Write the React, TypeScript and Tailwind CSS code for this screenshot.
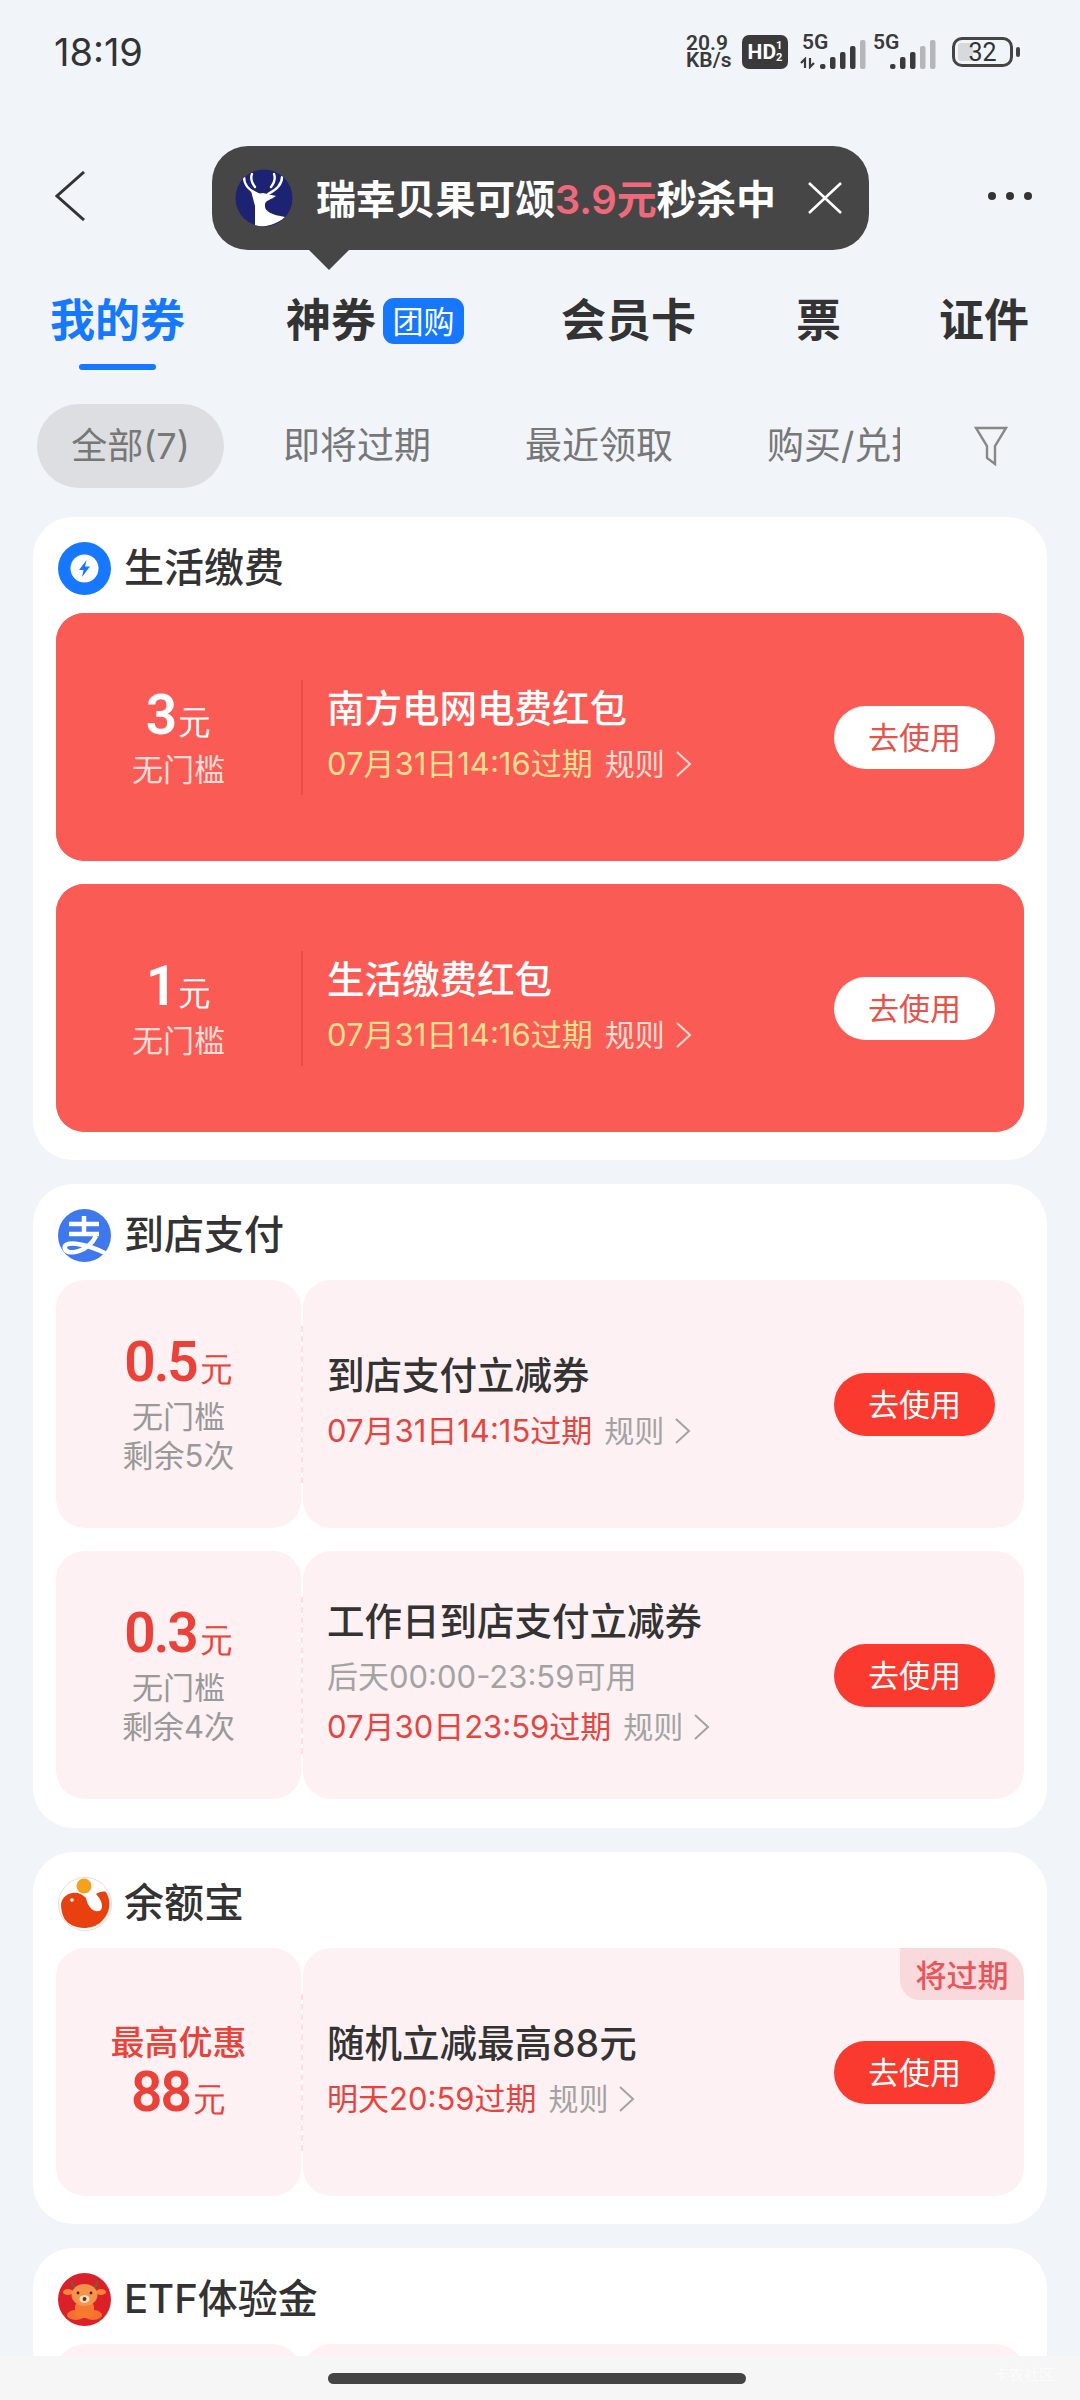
import React from "react";

function Deer() {
  return (
    <svg width="58" height="58" viewBox="0 0 58 58" className="shrink-0">
      <defs>
        <clipPath id="dc"><circle cx="29" cy="29" r="28.5" /></clipPath>
      </defs>
      <circle cx="29" cy="29" r="28.5" fill="#1d2273" />
      <g clipPath="url(#dc)">
        <path d="M16 22C20 24 25 25 28 24L41 27C36 31 30 31 30 36C29 42 36 46 50 48C43 55 30 58 20 58L20 37Z" fill="#fff" />
        <path d="M9 8C9 16 15 22 23 25M47 8C47 16 39 22 33 25M17 5C15 10 17 14 20 18M39 5C41 10 39 14 36 18" stroke="#fff" strokeWidth="2.4" fill="none" strokeLinecap="round" />
      </g>
    </svg>
  );
}

function Bolt() {
  return (
    <svg width="53" height="53" viewBox="0 0 53 53">
      <circle cx="26.5" cy="26.5" r="26.5" fill="#1677ff" />
      <circle cx="26.5" cy="26.5" r="14" fill="#fff" />
      <path d="M28.5 18L21 28H25.5L24 35L32 24.5H27Z" fill="#1677ff" />
    </svg>
  );
}

function Alipay() {
  return (
    <svg width="53" height="53" viewBox="0 0 53 53">
      <circle cx="26.5" cy="26.5" r="26.5" fill="#3f78ed" />
      <path d="M11 15H41M26 7V25M11 25H41M38 27C30 43 10 47 7 40C4 32 24 32 51 46" stroke="#fff" strokeWidth="4.5" fill="none" />
    </svg>
  );
}

function Yuebao() {
  return (
    <svg width="54" height="54" viewBox="0 0 54 54">
      <circle cx="27" cy="27" r="26.5" fill="#fff" stroke="#ecdcd2" />
      <circle cx="26" cy="9" r="7.5" fill="#f5a11c" />
      <path d="M3 27C5 15 20 12 28 21C30 31 37 37 43 33C46 28 42 21 38 17C41 15 45 14 48 15C54 25 52 37 43 45C33 54 13 53 6 41C4 37 3 32 3 27Z" fill="#e8410f" />
      <circle cx="14" cy="23" r="1.8" fill="#fff" />
    </svg>
  );
}

function Bull() {
  return (
    <svg width="53" height="53" viewBox="0 0 53 53">
      <circle cx="26.5" cy="26.5" r="26.5" fill="#dc2029" />
      <path d="M14 8C14 12 15 14 18 15M39 8C39 12 38 14 35 15" stroke="#7a5a3a" strokeWidth="2.5" fill="none" />
      <ellipse cx="10" cy="19" rx="5" ry="3" fill="#f5863a" />
      <ellipse cx="43" cy="19" rx="5" ry="3" fill="#f5863a" />
      <ellipse cx="18" cy="42" rx="9" ry="5" fill="#f5702a" />
      <ellipse cx="35" cy="42" rx="9" ry="5" fill="#f5702a" />
      <rect x="17" y="29" width="19" height="16" rx="5" fill="#f57a30" />
      <ellipse cx="26.5" cy="22" rx="13" ry="11" fill="#f7944a" />
      <ellipse cx="26.5" cy="26" rx="5" ry="4" fill="#fde2c4" />
      <circle cx="26.5" cy="26" r="2" fill="#7a2a12" />
      <circle cx="20" cy="20" r="1.4" fill="#4a2410" />
      <circle cx="33" cy="20" r="1.4" fill="#4a2410" />
    </svg>
  );
}

function Chevron({ color }: { color: string }) {
  return (
    <svg width="17" height="26" viewBox="0 0 17 26" className="ml-[10px]">
      <path d="M2 1L15 13L2 25" stroke={color} strokeWidth="2" fill="none" />
    </svg>
  );
}

function Signal({ grayFrom, arrows }: { grayFrom: number; arrows?: boolean }) {
  const bars = [
    { x: 0, h: 5 },
    { x: 10, h: 12 },
    { x: 20, h: 17 },
    { x: 30, h: 23 },
    { x: 40, h: 29 },
  ];
  return (
    <div className="relative flex h-[34px] items-end">
      {arrows ? (
        <svg width="16" height="12" viewBox="0 0 16 12" className="mr-[4px]">
          <path d="M1 6L5 2V11M10 1V10L14 6" stroke="#3a3a3a" strokeWidth="2.2" fill="none" />
        </svg>
      ) : null}
      <svg width="46" height="32" viewBox="0 0 46 32">
        {bars.map((b, i) => (
          <rect key={i} x={b.x} y={32 - b.h} width="5.5" height={b.h} rx="2" fill={i >= grayFrom ? "#b4b6b9" : "#3a3a3a"} />
        ))}
      </svg>
    </div>
  );
}

function StatusBar() {
  return (
    <div className="h-[146px] pt-[34px]">
      <div className="flex h-[36px] items-center pl-[54px]">
        <span className="w-[632px] text-[38px] leading-[36px] text-[#333]">18:19</span>
        <div className="flex w-[50px] flex-col font-['Roboto'] text-[21px] font-semibold leading-[17px] text-[#3a3a3a]">
          <span>20.9</span>
          <span>KB/s</span>
        </div>
        <div className="ml-[6px] flex h-[34px] w-[46px] items-center justify-center rounded-[7px] bg-[#3a3a3a] font-['Roboto'] text-white">
          <span className="text-[21px] font-bold leading-none">HD</span>
          <span className="flex flex-col text-[11px] font-bold leading-[12px]">
            <span>1</span>
            <span>2</span>
          </span>
        </div>
        <div className="relative ml-[12px] h-[34px] w-[66px] font-['Roboto']">
          <span className="absolute left-[2px] top-[-3px] text-[21px] font-semibold leading-[21px] text-[#3a3a3a]">5G</span>
          <div className="absolute bottom-0 left-0 flex">
            <Signal grayFrom={4} arrows />
          </div>
        </div>
        <div className="relative ml-[5px] h-[34px] w-[67px] font-['Roboto']">
          <span className="absolute left-[2px] top-[-3px] text-[21px] font-semibold leading-[21px] text-[#3a3a3a]">5G</span>
          <div className="absolute bottom-0 left-[19px] flex">
            <Signal grayFrom={3} />
          </div>
        </div>
        <div className="ml-[14px] flex items-center">
          <div className="relative flex h-[30px] w-[61px] items-center justify-center overflow-hidden rounded-[10px] border-[3px] border-[#444]">
            <div className="absolute bottom-[3px] left-[3px] top-[3px] w-[15px] rounded-[3px] bg-[#d8d9dc]" />
            <span className="relative font-['Roboto'] text-[25px] leading-none text-[#333]">32</span>
          </div>
          <div className="ml-[3px] h-[10px] w-[4px] rounded-[2px] bg-[#444]" />
        </div>
      </div>
    </div>
  );
}

function NavRow() {
  return (
    <div className="relative flex h-[100px] items-center justify-between pl-[55px] pr-[48px]">
      <svg width="30" height="50" viewBox="0 0 30 50">
        <path d="M29 1L2 25L29 49" stroke="#333" strokeWidth="3" fill="none" />
      </svg>
      <svg width="44" height="8" viewBox="0 0 44 8">
        <circle cx="4" cy="4" r="4" fill="#333" />
        <circle cx="22" cy="4" r="4" fill="#333" />
        <circle cx="40" cy="4" r="4" fill="#333" />
      </svg>
      <div className="absolute left-[212px] top-0 flex h-[104px] w-[657px] items-center rounded-[36px] bg-[#464646] pl-[23px]">
        <Deer />
        <span className="ml-[23px] mt-[3px] w-[469px] whitespace-nowrap text-[40px] font-semibold leading-[50px] tracking-[-0.2px] text-white">
          瑞幸贝果可颂<span className="text-[#f0697a]">3.9元</span>秒杀中
        </span>
        <svg width="34" height="32" viewBox="0 0 34 32" className="ml-[23px]">
          <path d="M1 1L33 31M33 1L1 31" stroke="#fff" strokeWidth="2.6" />
        </svg>
        <div className="absolute left-[96px] top-[103px] h-0 w-0 border-x-[21px] border-t-[21px] border-x-transparent border-t-[#464646]" />
      </div>
    </div>
  );
}

function Tabs() {
  return (
    <div className="flex items-start pl-[50px] pt-[46px] text-[45px] font-semibold leading-[52px] text-[#333]">
      <div className="flex w-[135px] flex-col items-center">
        <span className="mt-[3px] h-[49px] whitespace-nowrap text-[#1677ff]">我的券</span>
        <div className="mt-[20px] h-[6px] w-[77px] rounded-full bg-[#1677ff]" />
      </div>
      <div className="ml-[101px] flex items-center">
        <span className="mt-[3px] whitespace-nowrap">神券</span>
        <span className="ml-[7px] mt-[3px] flex h-[46px] w-[81px] items-center justify-center rounded-[11px] bg-[#1677ff] text-[31px] font-normal leading-none text-white">团购</span>
      </div>
      <span className="ml-[97px] mt-[3px] whitespace-nowrap">会员卡</span>
      <span className="ml-[100px] mt-[3px] whitespace-nowrap">票</span>
      <span className="ml-[98px] mt-[3px] whitespace-nowrap">证件</span>
    </div>
  );
}

function Filters() {
  const items = ["即将过期", "最近领取", "购买/兑换"];
  return (
    <div className="mt-[34px] flex h-[84px] items-center pl-[37px]">
      <div className="flex w-[863px] items-center gap-[24px] overflow-hidden text-[37px] leading-[86px] text-[#777]">
        <span className="flex h-[84px] w-[187px] shrink-0 items-center justify-center rounded-full bg-[#dcdee2] text-[36px]">全部(7)</span>
        {items.map((t) => (
          <span key={t} className="shrink-0 whitespace-nowrap px-[35px]">{t}</span>
        ))}
      </div>
      <svg width="34" height="40" viewBox="0 0 34 40" className="ml-[74px]">
        <path d="M2 2H32L21 20V38L13 32V20Z" stroke="#888" strokeWidth="2.4" fill="none" />
      </svg>
    </div>
  );
}

type CouponProps = {
  amount?: string;
  labels?: string[];
  top?: string;
  title: string;
  sub?: string;
  date: string;
  strong?: boolean;
  tag?: string;
};

function Coupon({ amount, labels, top, title, sub, date, strong, tag }: CouponProps) {
  const bg = strong ? "bg-[#fa5c55]" : "bg-[#fdf1f3]";
  return (
    <div className={`relative flex h-[248px] overflow-hidden rounded-[28px] ${strong ? "bg-[#fa5c55]" : "bg-white"}`}>
      <div className={`flex w-[245px] shrink-0 flex-col items-center justify-center rounded-[28px] ${bg}`}>
        {top ? (
          <span className="text-[34px] font-medium leading-[40px] text-[#ea4138]">{top}</span>
        ) : null}
        <div className={`flex h-[58px] items-baseline justify-center font-['Roboto'] leading-[58px] ${strong ? "text-white" : "text-[#ea4138]"}`}>
          <span className="text-[55px] font-semibold tracking-[-2px]">{amount}</span>
          <span className="ml-[3px] text-[33px] font-medium">元</span>
        </div>
        {labels ? (
          <div className={`mt-[6px] flex flex-col items-center text-[31px] leading-[39px] ${strong ? "text-[#ffdcd6]" : "text-[#999]"}`}>
            {labels.map((l) => (
              <span key={l}>{l}</span>
            ))}
          </div>
        ) : null}
      </div>
      <div className={`w-0 self-center border-l-2 ${strong ? "h-[115px] border-solid border-[#ea4c45]" : "h-[157px] border-dashed border-[#fbdfe3]"}`} />
      <div className={`relative flex flex-1 items-center justify-between rounded-[28px] pl-[24px] pr-[29px] ${bg}`}>
        <div className="flex flex-col pb-[3px]">
          <span className={`whitespace-nowrap text-[37.5px] font-medium leading-[46px] ${strong ? "text-white" : "text-[#333]"}`}>{title}</span>
          {sub ? <span className="mt-[12px] whitespace-nowrap text-[31px] leading-[40px] text-[#a3a3a3]">{sub}</span> : null}
          <div className={`flex h-[44px] items-center whitespace-nowrap text-[31px] leading-[44px] ${sub ? "mt-[8px]" : "mt-[10px]"}`}>
            <span className={strong ? "text-[#ffdf8e]" : "text-[#e5453e]"}>{date}</span>
            <span className={`ml-[12px] text-[30px] ${strong ? "text-[#ffdcd6]" : "text-[#a3a3a3]"}`}>规则</span>
            <Chevron color={strong ? "#ffdcd6" : "#a3a3a3"} />
          </div>
        </div>
        <span className={`flex h-[63px] w-[161px] items-center justify-center rounded-full text-[31px] leading-none ${strong ? "bg-white text-[#e5534b]" : "bg-[#fa3a2e] text-white"}`}>去使用</span>
        {tag ? (
          <span className="absolute right-0 top-0 flex h-[52px] w-[124px] items-center justify-center rounded-bl-[20px] rounded-tr-[28px] bg-[#fad9dd] pt-[2px] text-[31px] font-medium leading-none text-[#e8565a]">{tag}</span>
        ) : null}
      </div>
    </div>
  );
}

function Card({ icon, title, pad, children }: { icon: React.ReactNode; title: string; pad?: boolean; children?: React.ReactNode }) {
  return (
    <div className={`rounded-[40px] bg-white px-[23px] ${pad ? "pb-[29px]" : "pb-[28px]"}`}>
      <div className="flex h-[96px] items-start pt-[24px]">
        <div className="ml-[2px] mt-[1px] h-[53px] w-[53px] shrink-0">{icon}</div>
        <span className="ml-[13px] text-[40px] font-medium leading-[53px] text-[#333]">{title}</span>
      </div>
      <div className="flex flex-col gap-[23px]">{children}</div>
    </div>
  );
}

export default function App() {
  return (
    <div className="relative flex h-[2400px] w-[1080px] flex-col overflow-hidden bg-[#f1f4f9] font-['Inter','Noto_Sans_CJK_SC',sans-serif]">
      <div className="h-[2356px] shrink-0 overflow-hidden">
        <StatusBar />
        <NavRow />
        <Tabs />
        <Filters />
        <div className="mx-[33px] mt-[29px] flex flex-col gap-[24px]">
          <Card icon={<Bolt />} title="生活缴费">
            <Coupon strong amount="3" labels={["无门槛"]} title="南方电网电费红包" date="07月31日14:16过期" />
            <Coupon strong amount="1" labels={["无门槛"]} title="生活缴费红包" date="07月31日14:16过期" />
          </Card>
          <Card pad icon={<Alipay />} title="到店支付">
            <Coupon amount="0.5" labels={["无门槛", "剩余5次"]} title="到店支付立减券" date="07月31日14:15过期" />
            <Coupon amount="0.3" labels={["无门槛", "剩余4次"]} title="工作日到店支付立减券" sub="后天00:00-23:59可用" date="07月30日23:59过期" />
          </Card>
          <Card icon={<Yuebao />} title="余额宝">
            <Coupon top="最高优惠" amount="88" title="随机立减最高88元" date="明天20:59过期" tag="将过期" />
          </Card>
          <Card icon={<Bull />} title="ETF体验金">
            <Coupon amount="1" labels={["无门槛"]} title="ETF体验金" date="明天20:59过期" />
          </Card>
        </div>
      </div>
      <div className="flex h-[44px] flex-1 items-start justify-center bg-[#f6f6f6] pr-[6px] pt-[17px]">
        <div className="h-[11px] w-[418px] rounded-full bg-[#444]" />
      </div>
      <span className="absolute bottom-[18px] right-[26px] text-[15px] leading-none text-white/70">卡农社区</span>
    </div>
  );
}
